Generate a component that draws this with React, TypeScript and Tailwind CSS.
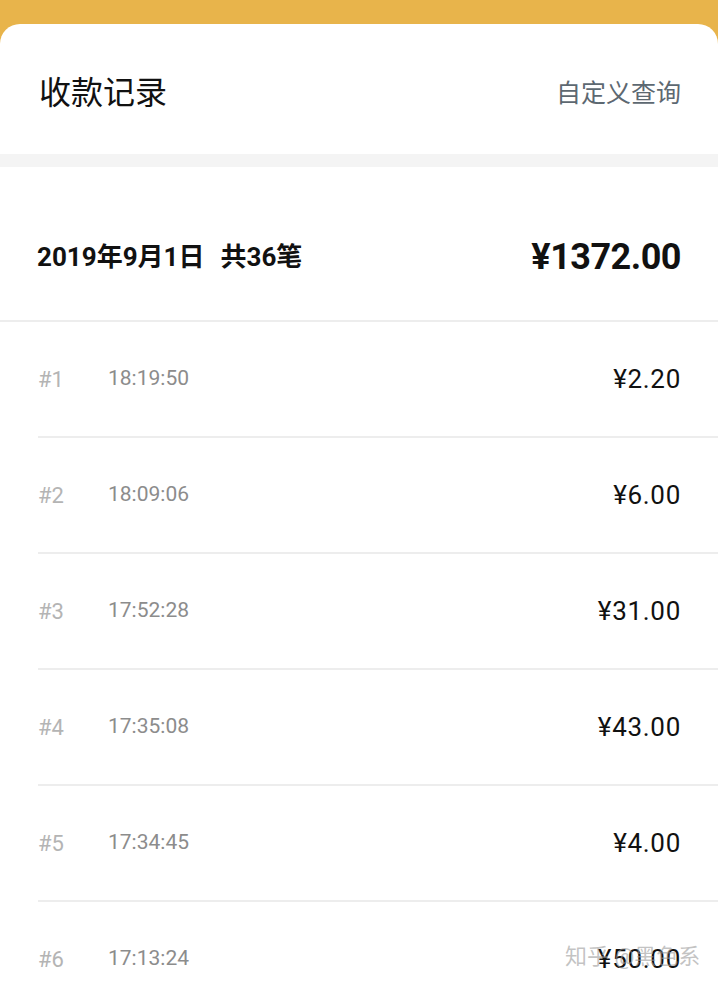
const records = [
  { no: 1, time: "18:19:50", amount: "2.20" },
  { no: 2, time: "18:09:06", amount: "6.00" },
  { no: 3, time: "17:52:28", amount: "31.00" },
  { no: 4, time: "17:35:08", amount: "43.00" },
  { no: 5, time: "17:34:45", amount: "4.00" },
  { no: 6, time: "17:13:24", amount: "50.00" },
];

const font = "font-['Roboto','Noto_Sans_CJK_SC',sans-serif]";

const App = () => {
  return (
    <div className={`relative h-[984px] w-[718px] overflow-hidden bg-[#e8b44b] ${font}`}>
      <div className="mt-[24px] rounded-t-[20px] bg-white">
        <div className="flex h-[130px] items-center justify-between px-[37px] pt-[8px]">
          <h1 className="ml-[2px] text-[32px] leading-none text-[#111]">收款记录</h1>
          <button className="text-[25px] leading-none text-[#5d6871]">自定义查询</button>
        </div>
        <div className="h-[13px] bg-[#f4f4f4]" />
        <div className="flex h-[155px] items-center justify-between border-b-2 border-[#ededed] px-[37px] pt-[26px]">
          <p className="text-[26px] font-bold leading-none text-[#111]">
            2019年9月1日<span className="ml-[16px]">共36笔</span>
          </p>
          <p className="text-[36px] font-bold leading-none tracking-[-0.5px] text-[#111]">¥1372.00</p>
        </div>
        {records.map((r) => (
          <div key={r.no} className="pl-[38px]">
            <div className="flex h-[116px] items-center border-b-2 border-[#ededed] pr-[37px]">
              <span className="w-[70px] text-[22px] text-[#b4b4b4]">#{r.no}</span>
              <span className="text-[21px] text-[#8c8c8c]">{r.time}</span>
              <span className="ml-auto text-[26px] tracking-[0.7px] text-[#111]">¥{r.amount}</span>
            </div>
          </div>
        ))}
      </div>
      <div className="absolute left-[565px] top-[940px] text-[22px] text-[#9b9b9b]/60">
        知乎 @黑色系
      </div>
    </div>
  );
};

export default App;
